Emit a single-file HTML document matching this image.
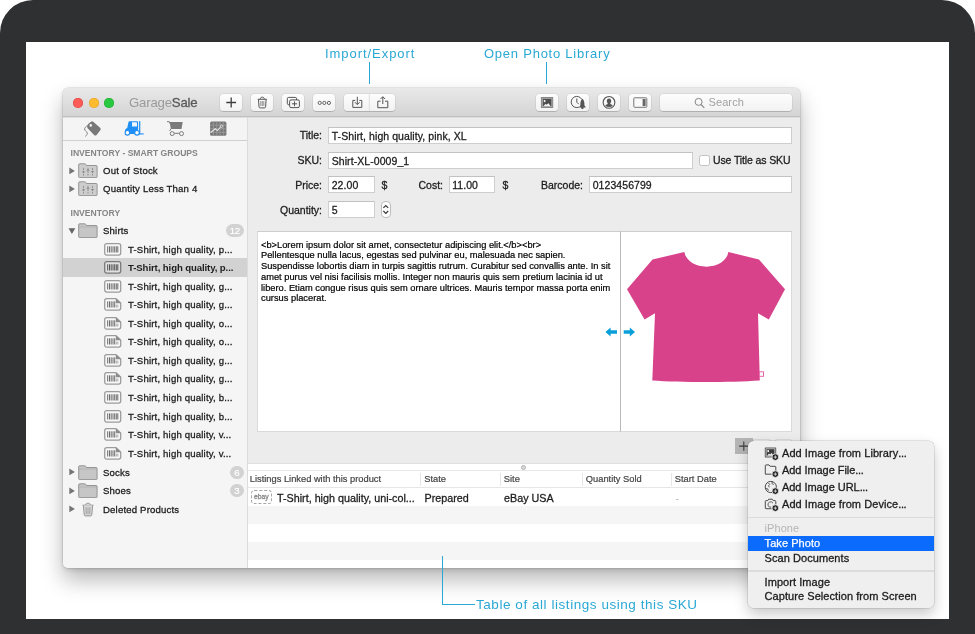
<!DOCTYPE html>
<html>
<head>
<meta charset="utf-8">
<title>GarageSale</title>
<style>
*{box-sizing:border-box;margin:0;padding:0}
html,body{width:975px;height:634px;overflow:hidden;background:#fff}
#win,#menu,.anno{will-change:transform}
body{font-family:"Liberation Sans",sans-serif;position:relative;color:#222}
.abs{position:absolute}
#frame{position:absolute;left:0;top:0;width:975px;height:660px;background:#2f3032;border-radius:33px 33px 0 0}
#screen{position:absolute;left:26px;top:42px;width:923px;height:577px;background:#fff;overflow:hidden}
.anno{position:absolute;color:#2aa8d5;font-size:13px;letter-spacing:.95px;white-space:nowrap}
.aline{position:absolute;background:#2aa8d5}
#win{position:absolute;left:63px;top:88px;width:737px;height:480px;background:#ececec;border-radius:5px;box-shadow:0 0 0 .5px rgba(0,0,0,.14),0 12px 22px rgba(0,0,0,.28),0 2px 5px rgba(0,0,0,.13)}
#tb{position:absolute;left:0;top:0;width:737px;height:29px;border-radius:5px 5px 0 0;background:linear-gradient(#e9e9e9,#d4d4d4);border-bottom:1px solid #c0c0c0}
.tl{position:absolute;top:10px;width:10px;height:10px;border-radius:50%}
.btn{position:absolute;top:6px;height:17px;border-radius:3.5px;background:linear-gradient(#fdfdfd,#f2f2f2);box-shadow:0 0 0 .6px rgba(0,0,0,.09),0 1px 0 rgba(0,0,0,.14)}
.btn svg{position:absolute;left:0;top:0}
#side{position:absolute;left:0;top:29px;width:185px;height:451px;background:#f5f5f5;border-right:1px solid #dcdcdc;border-top:1px solid #dedede;border-radius:0 0 0 5px;overflow:hidden}
#tabs{position:absolute;left:0;top:-1px;width:184px;height:24px;background:#f4f4f4;border-bottom:1px solid #cfcfcf}
.sh{position:absolute;margin-top:-1px;left:7.5px;font-size:8.6px;font-weight:bold;color:#858585;letter-spacing:0;white-space:nowrap}
.row{position:absolute;left:0;margin-top:-1px;width:184px;height:18.5px;font-size:10px;line-height:18.5px;white-space:nowrap;color:#1c1c1c}
.row .t{position:absolute;left:40px;top:1px;font-size:9.6px;letter-spacing:.17px;-webkit-text-stroke:.28px #1c1c1c}
.row.c .t{left:65px}
.row.sel{background:#d2d2d2}
.row.sel .t{font-weight:bold;-webkit-text-stroke:0;letter-spacing:-.1px}
.tri{position:absolute;left:5.5px;top:5.3px;width:0;height:0;border-left:6.5px solid #777;border-top:3.9px solid transparent;border-bottom:3.9px solid transparent}
.tri.d{left:5px;top:7px;border-left:3.5px solid transparent;border-right:3.5px solid transparent;border-top:6px solid #666;border-bottom:0}
.ico{position:absolute}
.badge{position:absolute;left:167px;top:3.4px;width:13.6px;height:13px;border-radius:6.5px;background:#d2d2d2;color:#fff;font-size:9.6px;line-height:13.4px;text-align:center;-webkit-text-stroke:.2px #fff}
#main{position:absolute;left:185px;top:29px;width:552px;height:451px;background:#ececec;box-shadow:inset 0 1px 0 #dcdcdc;border-radius:0 0 5px 0;overflow:hidden}
.lbl{position:absolute;margin-top:0;font-size:10.5px;white-space:nowrap;color:#1c1c1c;text-align:right;-webkit-text-stroke:.28px #1c1c1c}
.fld{position:absolute;height:17px;background:#fff;border:1px solid #cecece;border-top-color:#c2c2c2;font-size:10.5px;line-height:15px;padding:1.3px 0 0 2.7px;letter-spacing:.07px;white-space:nowrap;color:#1c1c1c;-webkit-text-stroke:.28px #1c1c1c}
#desc{position:absolute;left:9px;top:114px;width:364px;height:201px;background:#fff;border:1px solid #dadada;border-top-color:#cdcdcd;font-size:9.3px;line-height:10.8px;padding:7.5px 0 0 3px;white-space:nowrap;color:#000;-webkit-text-stroke:.2px #000}
#img{position:absolute;left:372px;top:114px;width:172px;height:201px;background:#fff;border:1px solid #dadada;border-top-color:#cdcdcd;border-left-color:#b9b9b9}
#tbl{position:absolute;left:0;top:346px;width:552px;height:105px;background:#fff}
.th{position:absolute;top:8px;margin-left:-.7px;height:16px;font-size:9.3px;line-height:16px;color:#444;white-space:nowrap;-webkit-text-stroke:.2px #444}
.cd{position:absolute;margin-left:-1px;top:10px;width:1px;height:13px;background:#e6e6e6}
.td{position:absolute;top:25.5px;height:18px;font-size:10.75px;line-height:18px;white-space:nowrap;color:#1c1c1c;-webkit-text-stroke:.28px #1c1c1c}
#menu{position:absolute;left:748px;top:440.5px;width:185.5px;height:166.5px;background:#efefef;border-radius:5.5px;box-shadow:0 0 0 .5px rgba(0,0,0,.18),0 6px 14px rgba(0,0,0,.22)}
.mi{position:absolute;left:16.6px;height:15px;font-size:11px;line-height:15px;white-space:nowrap;color:#1c1c1c;letter-spacing:.06px;-webkit-text-stroke:.3px #1c1c1c}
.mi b{font-weight:normal;letter-spacing:-.35px}
.mi.i{left:34px}
.msep{position:absolute;left:0;width:185.5px;height:1.5px;background:#dcdcdc}
</style>
</head>
<body>
<div id="frame"></div>
<div id="screen"></div>

<!-- annotations -->
<div class="anno" id="a1" style="left:325px;top:45.5px">Import/Export</div>
<div class="aline" style="left:369px;top:62px;width:1px;height:22px"></div>
<div class="anno" id="a2" style="left:484px;top:45.5px;letter-spacing:.76px">Open Photo Library</div>
<div class="aline" style="left:546px;top:62px;width:1px;height:22px"></div>

<div id="win">
  <div id="tb">
    <div class="tl" style="left:10px;background:#fc5b57;box-shadow:inset 0 0 0 .5px #df4744"></div>
    <div class="tl" style="left:25.5px;background:#fdbc2e;box-shadow:inset 0 0 0 .5px #de9f34"></div>
    <div class="tl" style="left:41px;background:#28c840;box-shadow:inset 0 0 0 .5px #27aa35"></div>
    <div class="abs" id="logo" style="left:66px;top:6px;font-size:13.2px;line-height:17px;letter-spacing:-.2px;white-space:nowrap"><span style="color:#9a9a9a">Garage</span><span style="color:#5a5a5a;-webkit-text-stroke:.3px #5a5a5a">Sale</span></div>

    <!-- + -->
    <div class="btn" style="left:157px;width:22px"><svg width="22" height="17" viewBox="0 0 22 17"><path d="M11.2 3.6v9.8M6.3 8.5h9.8" stroke="#3c3c3c" stroke-width="1.3" fill="none"/></svg></div>
    <!-- trash -->
    <div class="btn" style="left:188px;width:22px"><svg width="22" height="17" viewBox="0 0 22 17"><g fill="none" stroke="#555" stroke-width="1"><path d="M6.7 5.3h9.2"/><path d="M9.3 5.1c0-1.3.7-1.9 2-1.9s2 .6 2 1.900"/><path d="M7.5 5.5l.5 7.300c.1.800.5 1.100 1.200 1.100h4.200c.7 0 1.100-.3 1.200-1.100l.5-7.300"/></g><path d="M9.800 7v5M11.300 7v5M12.800 7v5" stroke="#777" stroke-width=".8"/></svg></div>
    <!-- duplicate -->
    <div class="btn" style="left:219px;width:22px"><svg width="22" height="17" viewBox="0 0 22 17"><g fill="none" stroke="#555" stroke-width="1"><rect x="5.300" y="3.400" width="9.300" height="7.300" rx="1.400"/><rect x="7.600" y="5.900" width="9.800" height="7.700" rx="1.400" fill="#f6f6f6"/><path d="M12.500 7.400v4.800M9.900 9.800h5.200"/></g></svg></div>
    <!-- ooo -->
    <div class="btn" style="left:250px;width:22px"><svg width="22" height="17" viewBox="0 0 22 17"><g fill="none" stroke="#555" stroke-width=".9"><circle cx="6.700" cy="8.900" r="1.600"/><circle cx="11.300" cy="8.900" r="1.600"/><circle cx="15.900" cy="8.900" r="1.600"/></g></svg></div>
    <!-- import/export -->
    <div class="btn" style="left:281px;width:50.500px"><svg width="51" height="17" viewBox="0 0 51 17"><path d="M25.300 0v17" stroke="#dedede" stroke-width="1"/><g fill="none" stroke="#555" stroke-width="1"><path d="M11.300 6.400H8.800v7h9v-7h-2.500"/><path d="M13.300 2.800v7.600M10.900 8.200l2.400 2.400 2.400-2.400"/><path d="M36.600 7.200h-2.800v6.500h10V7.200h-2.800"/><path d="M38.800 10V2.900M36.500 5l2.300-2.300L41.100 5"/></g></svg></div>

    <!-- photo library -->
    <div class="btn" style="left:473px;width:22px"><svg width="22" height="17" viewBox="0 0 22 17"><rect x="4.900" y="3.100" width="12.300" height="10.800" rx=".5" fill="#868686"/><rect x="5.800" y="4" width="10.500" height="9" fill="#a8a8a8"/><rect x="6.900" y="4.900" width="8.400" height="7.100" fill="#4d4d4d"/><rect x="7.800" y="6" width="1.600" height="2.100" fill="#f2f2f2"/><path d="M7.700 12l1.800-2.300 1.100 1.100 1.800-1.600 2.100 2.800z" fill="#f2f2f2"/></svg></div>
    <!-- clock/rocket -->
    <div class="btn" style="left:504px;width:22px"><svg width="22" height="17" viewBox="0 0 22 17"><g fill="none" stroke="#555" stroke-width="1"><path d="M14.700 5.300A5.600 5.600 0 1 0 11.900 13.200"/><path d="M9.800 4.500V8.200L11.700 10.100"/></g><path d="M15.400 4.800c1.500 1.300 2 3 2 5v1.400l1.500 2.300h-2.200l-.3.600v1h-2v-1l-.3-.6h-2.200l1.500-2.300V9.800c0-2 .5-3.700 2-5z" fill="#555"/></svg></div>
    <!-- user -->
    <div class="btn" style="left:535px;width:22px"><svg width="22" height="17" viewBox="0 0 22 17"><circle cx="11" cy="8.400" r="5.850" fill="none" stroke="#555" stroke-width="1.100"/><path d="M11 4.600c1.400 0 2.200 1 2.200 2.300 0 1-.4 1.800-.9 2.300v.7l2.600 1.300a5 5 0 0 1-7.800 0l2.600-1.300v-.7c-.5-.5-.9-1.300-.9-2.300 0-1.300.8-2.300 2.200-2.300z" fill="#555"/></svg></div>
    <!-- sidebar -->
    <div class="btn" style="left:566px;width:22px"><svg width="22" height="17" viewBox="0 0 22 17"><rect x="4.800" y="3.800" width="13" height="9.500" rx=".8" fill="#fafafa" stroke="#777" stroke-width="1"/><rect x="13.600" y="5" width="3" height="7.100" fill="#666"/></svg></div>
    <!-- search -->
    <div class="btn" style="left:597px;width:132px"><svg width="132" height="17" viewBox="0 0 132 17"><circle cx="38.600" cy="7.900" r="3.500" fill="none" stroke="#858585" stroke-width="1"/><path d="M41.100 10.500l3.200 3.300" stroke="#858585" stroke-width="1.100"/></svg><div class="abs" style="left:48.500px;top:1px;font-size:11px;line-height:15px;color:#a0a0a0;letter-spacing:.1px">Search</div></div>
  </div>

  <div id="side">
    <div id="tabs">
      <!-- tag -->
      <svg class="ico" style="left:20px;top:3px" width="20" height="18" viewBox="0 0 20 18"><path d="M5.400 3.700L8 1.800Q9.300 .9 10.500 1.900L17.100 7.800Q18.300 9 17.300 10.300L13.600 14.900Q12.400 16.100 11.100 15L4.900 8.600Q3.900 7.500 4.300 6Q4.600 4.600 5.400 3.700Z" fill="#787878"/><circle cx="7.700" cy="5.400" r="1.350" fill="#f4f4f4"/><path d="M6.500 5.500C4.500 5.300 2.200 6.700 1.600 8.700C1 10.900 4.300 11.200 4.300 13.300C4.300 14.600 3.400 15.500 2.300 16.400" fill="none" stroke="#797979" stroke-width=".9"/></svg>
      <!-- forklift -->
      <svg class="ico" style="left:59px;top:2px" width="23" height="19" viewBox="0 0 23 19"><g fill="#1f8ff6"><path d="M7.500 2.300h7.300c.8 0 1.300.5 1.300 1.300V15H3v-3.300c0-.9.300-1.500 1-1.900l1.200-.7 1.200-5.700c.1-.7.500-1.100 1.100-1.100z"/><rect x="17.100" y="2.100" width="1.200" height="13.300"/><rect x="17.100" y="14.400" width="4.600" height="1.100"/></g><path d="M10 3.300h4.200c.5 0 .8.300.8.800v3.400H10z" fill="#eef6ff"/><circle cx="5.400" cy="13.800" r="2.300" fill="#fff" stroke="#1f8ff6" stroke-width="1.100"/><circle cx="15" cy="13.800" r="2.300" fill="#fff" stroke="#1f8ff6" stroke-width="1.100"/></svg>
      <!-- cart -->
      <svg class="ico" style="left:103px;top:3px" width="20" height="18" viewBox="0 0 20 18"><path d="M1 1.700h2.300l.5 1.500" fill="none" stroke="#7b7b7b" stroke-width="1"/><path d="M3.500 2h13.200l-1.200 6.900H4.900z" fill="#7b7b7b"/><path d="M4.900 8.700L3.600 11" fill="none" stroke="#7b7b7b" stroke-width="1"/><circle cx="6.200" cy="13.600" r="2" fill="none" stroke="#7b7b7b" stroke-width="1"/><circle cx="15.500" cy="13.600" r="2" fill="none" stroke="#7b7b7b" stroke-width="1"/><path d="M8.200 13.300h5.300" stroke="#7b7b7b" stroke-width="1"/></svg>
      <!-- chart -->
      <svg class="ico" style="left:146px;top:4px" width="19" height="16" viewBox="0 0 19 16"><rect x="1.100" y=".5" width="16.300" height="14.300" rx="1.600" fill="#787878"/><path d="M4.400 .5v14.300M7.700 .5v14.300M11 .5v14.300M14.300 .5v14.300M1.100 4.100h16.300M1.100 7.700h16.300M1.100 11.300h16.300" stroke="#a2a2a2" stroke-width=".7"/><path d="M1.600 11.500l4.700-3.700 2.100 1.800 3.300-3.600" fill="none" stroke="#e8e8e8" stroke-width="1.100"/><circle cx="12.500" cy="5.200" r="1.200" fill="#787878" stroke="#e8e8e8" stroke-width=".8"/></svg>
    </div>

    <div class="sh" style="top:31px">INVENTORY - SMART GROUPS</div>
    <div class="row" style="top:44px"><svg class="ico" style="left:5.5px;top:5.9px" width="7" height="8" viewBox="0 0 7 8"><path d="M.3.600L5.900 3.900.3 7.200z" fill="#757575"/></svg><svg class="ico" style="left:15px;top:2px" width="20" height="15"><use href="#sfold"/></svg><span class="t">Out of Stock</span></div>
    <div class="row" style="top:62.200px"><svg class="ico" style="left:5.5px;top:5.9px" width="7" height="8" viewBox="0 0 7 8"><path d="M.3.600L5.900 3.900.3 7.200z" fill="#757575"/></svg><svg class="ico" style="left:15px;top:2px" width="20" height="15"><use href="#sfold"/></svg><span class="t">Quantity Less Than 4</span></div>
    <div class="sh" style="top:91px">INVENTORY</div>
    <div class="row" style="top:103.900px"><svg class="ico" style="left:4.8px;top:7.4px" width="8" height="7" viewBox="0 0 8 7"><path d="M.5.300h6.800L3.900 6z" fill="#666"/></svg><svg class="ico" style="left:15px;top:2px" width="20" height="15"><use href="#fold"/></svg><span class="t">Shirts</span><span class="badge" style="width:17.600px;left:163px;letter-spacing:-.2px">12</span></div>

    <div class="row c" style="top:123px"><svg class="ico" style="left:41px;top:3px" width="18" height="13"><use href="#bc"/></svg><span class="t">T-Shirt, high quality, p...</span></div>
    <div class="row c sel" style="top:141.300px"><svg class="ico" style="left:41px;top:3px" width="18" height="13"><use href="#bcs"/></svg><span class="t">T-Shirt, high quality, p...</span></div>
    <div class="row c" style="top:160px"><svg class="ico" style="left:41px;top:3px" width="18" height="13"><use href="#bc"/></svg><span class="t">T-Shirt, high quality, g...</span></div>
    <div class="row c" style="top:178.300px"><svg class="ico" style="left:41px;top:3px" width="18" height="13"><use href="#bd"/></svg><span class="t">T-Shirt, high quality, g...</span></div>
    <div class="row c" style="top:197px"><svg class="ico" style="left:41px;top:3px" width="18" height="13"><use href="#bd"/></svg><span class="t">T-Shirt, high quality, o...</span></div>
    <div class="row c" style="top:215.300px"><svg class="ico" style="left:41px;top:3px" width="18" height="13"><use href="#bd"/></svg><span class="t">T-Shirt, high quality, o...</span></div>
    <div class="row c" style="top:234px"><svg class="ico" style="left:41px;top:3px" width="18" height="13"><use href="#bd"/></svg><span class="t">T-Shirt, high quality, g...</span></div>
    <div class="row c" style="top:252.300px"><svg class="ico" style="left:41px;top:3px" width="18" height="13"><use href="#bd"/></svg><span class="t">T-Shirt, high quality, g...</span></div>
    <div class="row c" style="top:271px"><svg class="ico" style="left:41px;top:3px" width="18" height="13"><use href="#bc"/></svg><span class="t">T-Shirt, high quality, b...</span></div>
    <div class="row c" style="top:289.500px"><svg class="ico" style="left:41px;top:3px" width="18" height="13"><use href="#bc"/></svg><span class="t">T-Shirt, high quality, b...</span></div>
    <div class="row c" style="top:308px"><svg class="ico" style="left:41px;top:3px" width="18" height="13"><use href="#bd"/></svg><span class="t">T-Shirt, high quality, v...</span></div>
    <div class="row c" style="top:326.500px"><svg class="ico" style="left:41px;top:3px" width="18" height="13"><use href="#bd"/></svg><span class="t">T-Shirt, high quality, v...</span></div>

    <div class="row" style="top:345.500px"><svg class="ico" style="left:5.5px;top:5.9px" width="7" height="8" viewBox="0 0 7 8"><path d="M.3.600L5.900 3.900.3 7.200z" fill="#757575"/></svg><svg class="ico" style="left:15px;top:2px" width="20" height="15"><use href="#fold"/></svg><span class="t">Socks</span><span class="badge">6</span></div>
    <div class="row" style="top:364px"><svg class="ico" style="left:5.5px;top:5.9px" width="7" height="8" viewBox="0 0 7 8"><path d="M.3.600L5.900 3.900.3 7.200z" fill="#757575"/></svg><svg class="ico" style="left:15px;top:2px" width="20" height="15"><use href="#fold"/></svg><span class="t">Shoes</span><span class="badge">3</span></div>
    <div class="row" style="top:382.500px"><svg class="ico" style="left:5.5px;top:5.9px" width="7" height="8" viewBox="0 0 7 8"><path d="M.3.600L5.900 3.900.3 7.200z" fill="#757575"/></svg><svg class="ico" style="left:18px;top:2px" width="14" height="15" viewBox="0 0 14 15"><g fill="none" stroke="#8a8a8a" stroke-width=".9"><path d="M1.500 3.200h11"/><path d="M4.800 3c0-1.200.7-1.800 2.200-1.800S9.200 1.800 9.200 3"/><path d="M2.400 3.500l.8 9.200c.1.800.5 1.200 1.300 1.200h5c.8 0 1.200-.4 1.300-1.200l.8-9.200" fill="#d9d9d9"/><path d="M5 5.200l.3 7M7 5.200v7M9 5.200l-.3 7" stroke-width=".7"/></g></svg><span class="t">Deleted Products</span></div>
  </div>

  <div id="main">
    <div class="lbl" style="left:0;width:74px;top:12px">Title:</div>
    <div class="fld" style="left:80px;top:10px;width:464px">T-Shirt, high quality, pink, XL</div>
    <div class="lbl" style="left:0;width:74px;top:37px">SKU:</div>
    <div class="fld" style="left:80px;top:35px;width:365px">Shirt-XL-0009_1</div>
    <div class="abs" style="left:451px;top:38px;width:11px;height:11px;border:1px solid #c2c2c2;border-radius:2.500px;background:#fff"></div>
    <div class="lbl" id="uts" style="left:465px;top:37px;text-align:left;letter-spacing:-.12px">Use Title as SKU</div>
    <div class="lbl" style="left:0;width:74px;top:62px">Price:</div>
    <div class="fld" style="left:80px;top:59px;width:46.500px">22.00</div>
    <div class="lbl" style="left:133.500px;top:62px">$</div>
    <div class="lbl" style="left:120px;width:75px;top:62px">Cost:</div>
    <div class="fld" style="left:200.500px;top:59px;width:46.500px">11.00</div>
    <div class="lbl" style="left:254.500px;top:62px">$</div>
    <div class="lbl" style="left:260px;width:75px;top:62px">Barcode:</div>
    <div class="fld" style="left:341px;top:59px;width:203px">0123456799</div>
    <div class="lbl" style="left:0;width:74px;top:87px">Quantity:</div>
    <div class="fld" style="left:80px;top:84px;width:46.500px">5</div>
    <div class="abs" style="left:133px;top:84px;width:9.500px;height:17px;border-radius:4px;background:#fdfdfd;border:1px solid #bdbdbd"><svg class="abs" style="left:0;top:0" width="8" height="15" viewBox="0 0 8 15"><path d="M1.400 5.900l2.400-2.400 2.400 2.400M1.400 9l2.400 2.400 2.400-2.400" fill="none" stroke="#3a3a3a" stroke-width="1.200"/></svg></div>

    <div id="desc">&lt;b&gt;Lorem ipsum dolor sit amet, consectetur adipiscing elit.&lt;/b&gt;&lt;br&gt;<br>Pellentesque nulla lacus, egestas sed pulvinar eu, malesuada nec sapien.<br>Suspendisse lobortis diam in turpis sagittis rutrum. Curabitur sed convallis ante. In sit<br>amet purus vel nisi facilisis mollis. Integer non mauris quis sem pretium lacinia id ut<br>libero. Etiam congue risus quis sem ornare ultrices. Mauris tempor massa porta enim<br>cursus placerat.</div>
    <div id="img">
      <svg class="abs" style="left:0;top:0" width="170" height="199" viewBox="621 232 170 199"><path d="M684.300 252.100L652.500 259.600 627 289.300 644.600 319.600 655 313.300 652.300 380.500C680 382.500 730 382.500 759.800 380.500L758 313.300 768.800 319.600 785 289.300 759 259.600 728.400 252.100C725 271.500 688 271.500 684.300 252.100Z" fill="#d8428b"/><rect x="759.300" y="371.800" width="4.200" height="4.500" fill="#fff" stroke="#e455a0" stroke-width=".9"/></svg>
    </div>
    <!-- arrows -->
    <svg class="abs" style="left:355px;top:209px" width="34" height="12" viewBox="0 0 34 12"><g fill="#0a9fd9"><path d="M2.400 6l5.200-4.600v2.900h6.400v3.400H7.600v2.900z"/><path d="M32 6l-5.200-4.600v2.900h-6.100v3.400h6.100v2.900z"/></g></svg>

    <!-- small buttons bottom right -->
    <div class="abs" style="left:487px;top:321px;width:18px;height:16px;background:#b4b4b4"><svg class="abs" style="left:0;top:0" width="18" height="15"><path d="M8.800 3.500v9.200M4.200 8.100h9.200" stroke="#3a3a3a" stroke-width="1.100"/></svg></div>
    <div class="abs" style="left:505px;top:321.500px;width:17px;height:15px;background:#f7f7f7;border:1px solid #d8d8d8"></div>
    <div class="abs" style="left:527px;top:321.500px;width:17px;height:15px;background:#f7f7f7;border:1px solid #d8d8d8;border-radius:2px"></div>

    <div id="tbl">
      <div class="abs" style="left:0;top:0;width:552px;height:1px;background:#dfdfdf"></div>
      <div class="abs" style="left:0;top:7px;width:552px;height:1px;background:#e6e6e6"></div>
      <div class="abs" style="left:273px;top:1.700px;width:5.400px;height:5.400px;border-radius:3px;background:#dadada;border:1.200px solid #b2b2b2"></div>
      <div class="th" style="left:2.500px">Listings Linked with this product</div>
      <div class="cd" style="left:173px"></div>
      <div class="th" style="left:177px">State</div>
      <div class="cd" style="left:252.500px"></div>
      <div class="th" style="left:256.500px">Site</div>
      <div class="cd" style="left:334.500px"></div>
      <div class="th" style="left:338.500px">Quantity Sold</div>
      <div class="cd" style="left:423.500px"></div>
      <div class="th" style="left:427.500px">Start Date</div>
      <div class="abs" style="left:0;top:24px;width:552px;height:1px;background:#e6e6e6"></div>
      <div class="abs" style="left:0;top:43px;width:552px;height:18px;background:#f5f5f5"></div>
      <div class="abs" style="left:0;top:79px;width:552px;height:17.500px;background:#f5f5f5"></div>
      <div class="abs" style="left:2.800px;top:27px;width:21px;height:14px;border:1px dashed #a6a6a6;border-radius:3.500px;font-size:6.800px;line-height:11px;text-align:center;color:#8a8a8a;-webkit-text-stroke:.3px #8a8a8a">ebay</div>
      <div class="td" style="left:29px">T-Shirt, high quality, uni-col...</div>
      <div class="td" style="left:176.500px">Prepared</div>
      <div class="td" style="left:256px">eBay USA</div>
      <div class="td" style="left:427.500px;color:#bbb;-webkit-text-stroke:0">-</div>
    </div>
  </div>
</div>

<!-- bottom annotation -->
<div class="aline" style="left:442px;top:555.500px;width:1px;height:49.500px"></div>
<div class="aline" style="left:442px;top:604px;width:33px;height:1px"></div>
<div class="anno" id="a3" style="left:475.5px;top:596.500px;font-size:13.500px;letter-spacing:.55px">Table of all listings using this SKU</div>

<!-- context menu -->
<div id="menu">
  <svg class="abs" style="left:16px;top:4.500px" width="15" height="15" viewBox="0 0 15 15"><rect x=".8" y="1.500" width="11.400" height="10" rx=".5" fill="#5a5a5a"/><rect x="1.700" y="2.400" width="9.600" height="8.200" fill="#c9c9c9"/><rect x="2.600" y="3.200" width="7.800" height="6.500" fill="#3c3c3c"/><rect x="3.400" y="4.100" width="1.600" height="2" fill="#f2f2f2"/><path d="M3.300 9.700l1.700-2.100 1 1 1.700-1.500 2 2.600z" fill="#f2f2f2"/><circle cx="11.300" cy="11.100" r="3.300" fill="#1c1c1c" stroke="#efefef" stroke-width=".8"/><path d="M11.300 9.400v3.400M9.600 11.100h3.400" stroke="#fff" stroke-width=".75"/></svg>
  <div class="mi i" style="top:5px">Add Image from Library<b>...</b></div>
  <svg class="abs" style="left:16px;top:21.500px" width="15" height="15" viewBox="0 0 15 15"><path d="M1.300 11.200V2.600c0-.4.300-.7.700-.7h3l1.100 1.400h5c.4 0 .7.300.7.700v4" fill="none" stroke="#4c4c4c" stroke-width="1"/><path d="M1.300 11.200h6.500" stroke="#4c4c4c" stroke-width="1"/><circle cx="11.300" cy="11.100" r="3.300" fill="#1c1c1c" stroke="#efefef" stroke-width=".8"/><path d="M11.300 9.400v3.400M9.600 11.100h3.400" stroke="#fff" stroke-width=".75"/></svg>
  <div class="mi i" style="top:22px;letter-spacing:-.05px">Add Image File<b>...</b></div>
  <svg class="abs" style="left:16px;top:38.500px" width="15" height="15" viewBox="0 0 15 15"><circle cx="6.800" cy="7" r="5.600" fill="none" stroke="#4c4c4c" stroke-width="1"/><path d="M4.200 2.800l1.500 1.600-1.200 1.500.8 1.400M8.300 1.800l-.4 1.700 1.800 1M2 8.600l1.800.3.600 1.700" fill="none" stroke="#4c4c4c" stroke-width=".9"/><circle cx="11.300" cy="11.100" r="3.300" fill="#1c1c1c" stroke="#efefef" stroke-width=".8"/><path d="M11.300 9.400v3.400M9.600 11.100h3.400" stroke="#fff" stroke-width=".75"/></svg>
  <div class="mi i" style="top:39px;letter-spacing:-.05px">Add Image URL<b>...</b></div>
  <svg class="abs" style="left:16px;top:55.500px" width="15" height="15" viewBox="0 0 15 15"><path d="M7.600 11.700H2c-.4 0-.7-.3-.7-.7V4.300c0-.4.300-.7.700-.7h1.800l.9-1.400h3.600l.9 1.400h1.900c.4 0 .7.300.7.700v3" fill="none" stroke="#4c4c4c" stroke-width="1"/><path d="M9 6.200a2.700 2.700 0 1 0-1.800 4" fill="none" stroke="#4c4c4c" stroke-width=".9"/><circle cx="11.300" cy="11.100" r="3.300" fill="#1c1c1c" stroke="#efefef" stroke-width=".8"/><path d="M11.300 9.400v3.400M9.600 11.100h3.400" stroke="#fff" stroke-width=".75"/></svg>
  <div class="mi i" style="top:56px">Add Image from Device<b>...</b></div>
  <div class="msep" style="top:75.500px"></div>
  <div class="mi" style="top:80px;color:#b5b5b5;-webkit-text-stroke:0">iPhone</div>
  <div class="abs" style="left:0;top:95px;width:185.500px;height:14.500px;background:#0b6bfd"></div>
  <div class="mi" style="top:95px;color:#fff;-webkit-text-stroke:.25px #fff">Take Photo</div>
  <div class="mi" style="top:109.600px">Scan Documents</div>
  <div class="msep" style="top:129px"></div>
  <div class="mi" style="top:134px">Import Image</div>
  <div class="mi" style="top:148.100px">Capture Selection from Screen</div>
</div>

<svg width="0" height="0" style="position:absolute">
  <defs>
    <g id="fold"><path d="M.7 13.800V1.600c0-.5.300-.8.800-.8h5.300c.4 0 .7.100.9.500l.7 1.200h9.900c.5 0 .8.300.8.800v10.500c0 .5-.3.800-.8.800H1.500c-.5 0-.8-.3-.8-.8z" fill="#c6c6c6" stroke="#8c8c8c" stroke-width=".9"/><path d="M.9 4h18" stroke="#aaa" stroke-width=".6"/></g>
    <g id="sfold"><path d="M.7 13.800V1.600c0-.5.300-.8.800-.8h5.300c.4 0 .7.100.9.500l.7 1.200h9.900c.5 0 .8.300.8.800v10.500c0 .5-.3.800-.8.800H1.500c-.5 0-.8-.3-.8-.8z" fill="#cdcdcd" stroke="#8c8c8c" stroke-width=".9"/><path d="M5.500 4.800v7.800M10 4.800v7.800M14.500 4.800v7.800" stroke="#858585" stroke-width=".8" stroke-dasharray="2.200 .8"/><path d="M4.300 8.900h2.400M8.800 7.200h2.400M13.300 8.600h2.400" stroke="#7c7c7c" stroke-width="1"/></g>
    <g id="bc"><rect x=".7" y=".7" width="16" height="11.400" rx="2" fill="#f7f7f7" stroke="#9c9c9c" stroke-width="1.300"/><path d="M3.700 3.300v6.200M5.500 3.300v6.200M7.200 3.300v6.200M9 3.300v6.200M10.700 3.300v6.200M12.300 3.300v6.200M13.800 3.300v6.200" stroke="#5c5c5c" stroke-width=".9"/></g>
    <g id="bcs"><rect x=".7" y=".7" width="16" height="11.400" rx="2" fill="#e0e0e0" stroke="#7a7a7a" stroke-width="1.300"/><path d="M3.700 3.300v6.200M5.500 3.300v6.200M7.200 3.300v6.200M9 3.300v6.200M10.700 3.300v6.200M12.300 3.300v6.200M13.800 3.300v6.200" stroke="#444" stroke-width=".9"/></g>
    <g id="bd"><path d="M2.700.7h9.300l4.700 4.400v5c0 1.300-.7 2-2 2H2.700c-1.300 0-2-.7-2-2V2.700c0-1.300.7-2 2-2z" fill="#f7f7f7" stroke="#9c9c9c" stroke-width="1.300"/><path d="M11.800.5v4.800h5.100z" fill="#8a8a8a"/><path d="M3.700 3.300v6.200M5.500 3.300v6.200M7.200 3.300v6.200M9 3.300v6.200M10.700 3.300v6.200" stroke="#5c5c5c" stroke-width=".9"/><path d="M12.300 6.600v2.900M13.800 6.600v2.900" stroke="#9a9a9a" stroke-width=".8"/></g>
  </defs>
</svg>
</body>
</html>
